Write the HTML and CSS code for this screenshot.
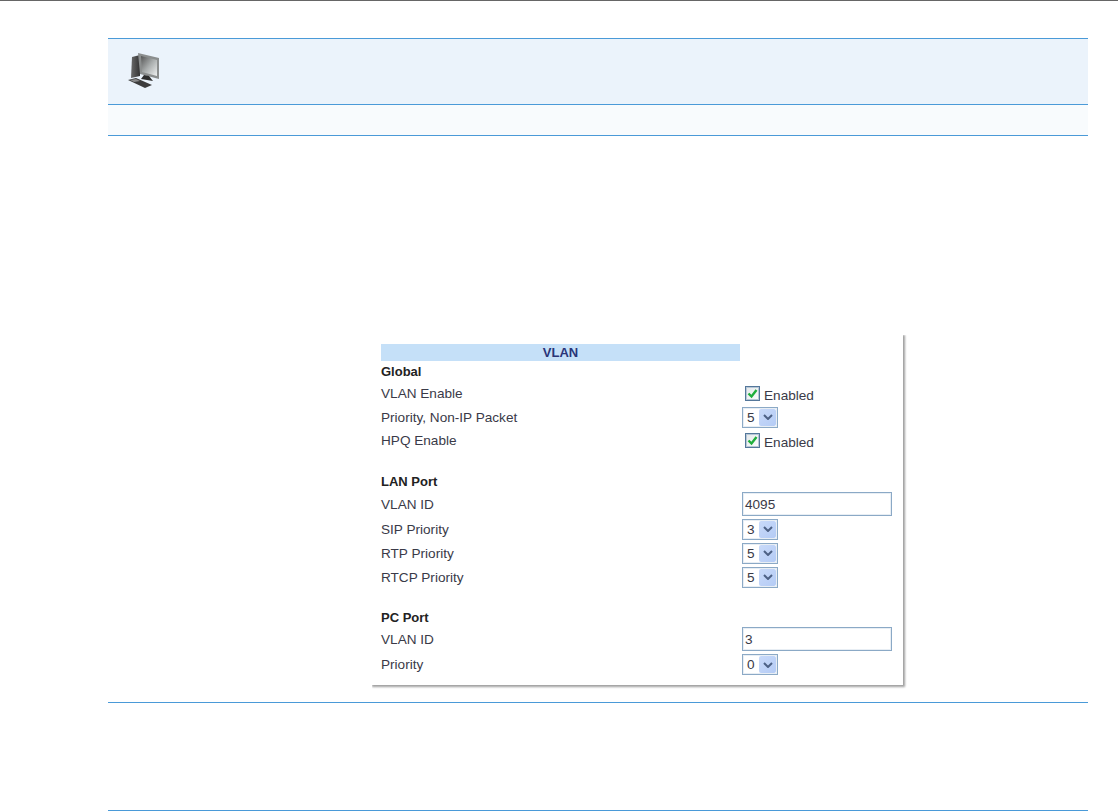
FILE: index.html
```html
<!DOCTYPE html>
<html lang="en">

<head>
  <meta charset="UTF-8" />
  <meta name="viewport" content="width=device-width, initial-scale=1.0" />
  <title>VLAN</title>
  <link rel="stylesheet" href="styles.css">
</head>

<body>
  <div class="page">
    <div class="note-head">
      <svg class="note-icon" width="32" height="36" viewBox="0 0 32 36">
        <defs>
          <linearGradient id="screen" x1="0" y1="0" x2="1" y2="1">
            <stop offset="0" stop-color="#555" />
            <stop offset="0.5" stop-color="#a9adad" />
            <stop offset="1" stop-color="#eef0f0" />
          </linearGradient>
          <linearGradient id="tower" x1="0" y1="0" x2="1" y2="0">
            <stop offset="0" stop-color="#6a6a6a" />
            <stop offset="1" stop-color="#333" />
          </linearGradient>
        </defs>
        <polygon points="4,4 12,2 12,23 3,25" fill="url(#tower)" />
        <polygon points="10,0 31,5 31,26 12,21" fill="#8b8e8e" />
        <polygon points="13,3 29,7 29,23 14,19" fill="url(#screen)" />
        <polygon points="16,22 21,23 25,28 13,26" fill="#2e2e2e" />
        <polygon points="0,27 8,25 24,32 17,35" fill="#3c3c3c" />
        <polygon points="2,27 8,26 12,28 6,29" fill="#8a8a8a" />
      </svg>
    </div>
    <div class="note-sub"></div>

    <div class="figure-area">
      <div class="figure">
        <div class="vlan-title">VLAN</div>

        <div class="section section-global">
          <div class="row group"><span>Global</span></div>
          <div class="row"><span>VLAN Enable</span>
            <div class="check-wrap">
              <span class="check">
                <svg width="11" height="11" viewBox="0 0 11 11"><path d="M1.5 5.5 L4.5 8.5 L9.5 2" fill="none" stroke="#1fae3c" stroke-width="2.4" /></svg>
              </span>
              <span class="check-label">Enabled</span>
            </div>
          </div>
          <div class="row"><span>Priority, Non-IP Packet</span>
            <div class="pick">5<span class="pick-btn"><svg width="10" height="6" viewBox="0 0 10 6"><path d="M1 1 L5 5 L9 1" fill="none" stroke="#4d6185" stroke-width="2" /></svg></span></div>
          </div>
          <div class="row"><span>HPQ Enable</span>
            <div class="check-wrap">
              <span class="check">
                <svg width="11" height="11" viewBox="0 0 11 11"><path d="M1.5 5.5 L4.5 8.5 L9.5 2" fill="none" stroke="#1fae3c" stroke-width="2.4" /></svg>
              </span>
              <span class="check-label">Enabled</span>
            </div>
          </div>
        </div>

        <div class="section section-lan">
          <div class="row group"><span>LAN Port</span></div>
          <div class="row row-field"><span>VLAN ID</span><div class="field">4095</div></div>
          <div class="row"><span>SIP Priority</span>
            <div class="pick">3<span class="pick-btn"><svg width="10" height="6" viewBox="0 0 10 6"><path d="M1 1 L5 5 L9 1" fill="none" stroke="#4d6185" stroke-width="2" /></svg></span></div>
          </div>
          <div class="row"><span>RTP Priority</span>
            <div class="pick">5<span class="pick-btn"><svg width="10" height="6" viewBox="0 0 10 6"><path d="M1 1 L5 5 L9 1" fill="none" stroke="#4d6185" stroke-width="2" /></svg></span></div>
          </div>
          <div class="row"><span>RTCP Priority</span>
            <div class="pick">5<span class="pick-btn"><svg width="10" height="6" viewBox="0 0 10 6"><path d="M1 1 L5 5 L9 1" fill="none" stroke="#4d6185" stroke-width="2" /></svg></span></div>
          </div>
        </div>

        <div class="section section-pc">
          <div class="row group"><span>PC Port</span></div>
          <div class="row"><span>VLAN ID</span><div class="field">3</div></div>
          <div class="row row-last"><span>Priority</span>
            <div class="pick">0<span class="pick-btn"><svg width="10" height="6" viewBox="0 0 10 6"><path d="M1 1 L5 5 L9 1" fill="none" stroke="#4d6185" stroke-width="2" /></svg></span></div>
          </div>
        </div>
      </div>
    </div>

    <div class="note-foot"></div>
  </div>
</body>

</html>
```

FILE: styles.css
```css
* {
  margin: 0;
  padding: 0;
  box-sizing: border-box;
}

body {
  background: #fff;
  font-family: "Liberation Sans", Arial, sans-serif;
  font-size: 13.6px;
  color: #3a3a48;
}

.page {
  height: 811px;
  padding: 38px 30px 0 108px;
  border-top: 1px solid #666;
}

.note-head {
  margin-top: -1px;
  height: 67px;
  padding: 14px 0 0 20px;
  background: #ebf3fb;
  border-top: 1px solid #4a9ad8;
  border-bottom: 1px solid #4a9ad8;
}

.note-icon {
  display: block;
}

.note-sub {
  height: 31px;
  background: #f8fbfd;
  border-bottom: 1px solid #4a9ad8;
}

.figure-area {
  height: 567px;
  padding: 199px 0 0 264px;
  border-bottom: 1px solid #4a9ad8;
}

.note-foot {
  height: 108px;
  border-bottom: 1px solid #4a9ad8;
}

.figure {
  width: 531px;
  height: 350px;
  padding: 9px 0 0 9px;
  background: #fff;
  box-shadow: 1px 1px 2px 1px #a0a0a0;
  clip-path: inset(0 -6px -6px 0);
}

.vlan-title {
  width: 359px;
  height: 17px;
  line-height: 17px;
  background: #c5e0f8;
  color: #2a3578;
  font-size: 13px;
  font-weight: bold;
  text-align: center;
}

.row {
  height: 24px;
  display: grid;
  grid-template-columns: 361px 1fr;
  align-items: center;
}

.group {
  height: 20px;
  font-size: 13px;
  font-weight: bold;
  color: #222;
}

.section-global .row {
  height: 23.5px;
}

.section-global .group {
  height: 21px;
}

.section-lan {
  margin-top: 18.5px;
}

.section-lan .group {
  height: 21px;
}

.section-pc {
  margin-top: 18px;
}

.row-field {
  height: 25px;
  align-items: start;
}

.row-field > span {
  align-self: center;
}

.row-last {
  height: 27px;
}

.check-wrap {
  display: flex;
  align-items: center;
  gap: 4px;
  padding-left: 3px;
}

.check {
  width: 15px;
  height: 15px;
  display: flex;
  align-items: center;
  justify-content: center;
  background: linear-gradient(135deg, #e4e8ea, #fbfcfc);
  border: 1px solid #54779a;
  box-shadow: inset 0 0 0 1px #b7c7d6;
}

.check-label {
  margin-top: 3px;
}

.pick {
  width: 36px;
  height: 21px;
  padding-left: 4px;
  display: flex;
  align-items: center;
  justify-content: space-between;
  border: 1px solid #8ba9c6;
  box-shadow: inset 0 0 0 1px rgba(139, 169, 198, 0.2);
  background: #fff;
}

.pick-btn {
  width: 17px;
  height: 17px;
  margin-right: 1px;
  display: flex;
  align-items: center;
  justify-content: center;
  background: linear-gradient(135deg, #c9daf9, #b4cbf5);
  border-radius: 2px;
}

.field {
  width: 150px;
  height: 24px;
  line-height: 23px;
  padding-left: 2px;
  border: 1px solid #8ba9c6;
  box-shadow: inset 0 0 0 1px rgba(139, 169, 198, 0.2);
  background: #fff;
}
```
